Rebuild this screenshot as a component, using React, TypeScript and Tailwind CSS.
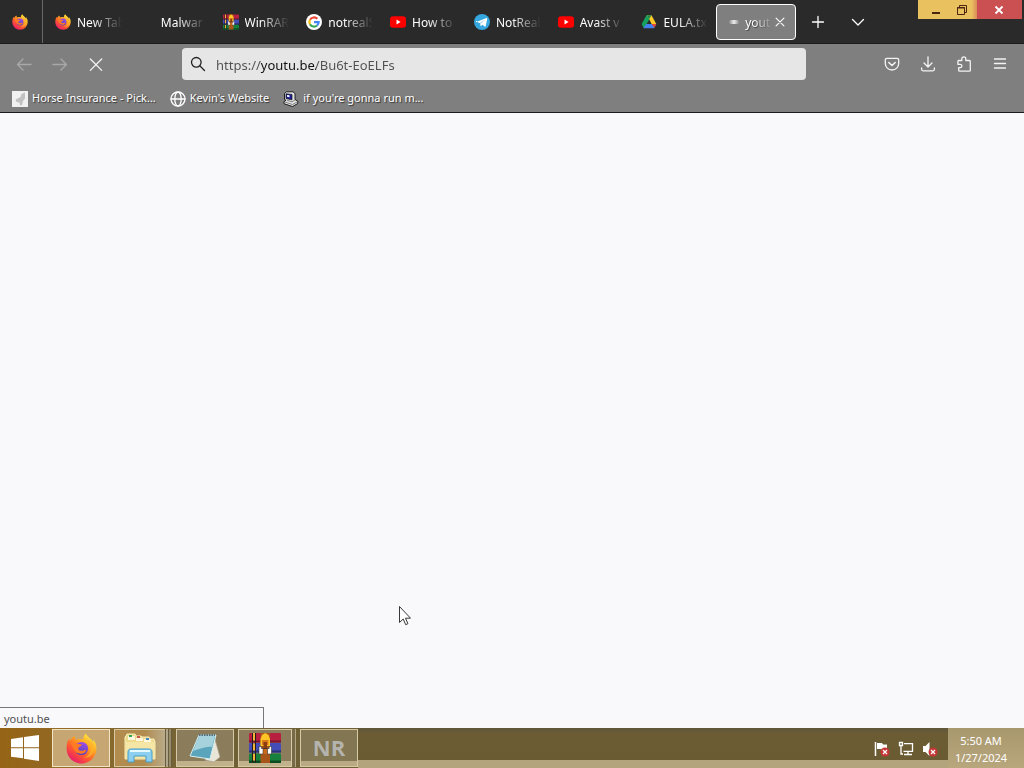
import type { ReactNode } from "react";

function FirefoxIcon({ className }: { className: string }) {
  return (
    <svg viewBox="0 0 32 32" className={className} aria-hidden="true">
      <defs>
        <linearGradient id="fx-body" x1="0.85" y1="0.05" x2="0.2" y2="0.95">
          <stop offset="0" stopColor="#fff04a" />
          <stop offset="0.35" stopColor="#ffa420" />
          <stop offset="0.65" stopColor="#ff5a2e" />
          <stop offset="1" stopColor="#e8186e" />
        </linearGradient>
        <linearGradient id="fx-globe" x1="0.7" y1="0" x2="0.3" y2="1">
          <stop offset="0" stopColor="#a04ce8" />
          <stop offset="1" stopColor="#4d42b8" />
        </linearGradient>
      </defs>
      <path
        d="M20.5 0.5c-2.5 2-2.8 4.500-2.600 6.300-2-.9-5.500-.8-7.200.4C9.300 6 8.800 4.500 8.900 3 6.500 4.300 4.800 6.500 4 8.200 3.500 7.500 3.400 6.300 3.500 5.500 1.500 8 .6 12 .6 16c0 8.700 6.900 15.500 15.400 15.500S31.400 24.700 31.400 16c0-3.800-1.300-7.500-3.500-9.800.5 1.500.6 2.800.5 3.800C26.500 5.500 22.300 4.500 20.500.5z"
        fill="url(#fx-body)"
      />
      <circle cx="16" cy="16" r="6.800" fill="url(#fx-globe)" />
      <path
        d="M5 10.500c2.500-1 4.500-.6 6 .8 2 .2 4.300.2 5.500.6-.3 1.800-3.200 2.300-3.800 3.200-.3 2 .8 3.200 3 3.300 2 .1 3.500-1.500 5.300-.6-1.200 3.300-5 4.400-8.200 3.200C8 19.300 7.500 14.500 5 10.500z"
        fill="#ff7a22"
      />
      <path d="M18 7.500c5 .6 8 5 7.500 10-.6 4.500-4 7.500-8 8 7 1 12-4 11.500-10.500C28.500 10 24 6.500 18 7.500z" fill="#ffb32c" opacity="0.75" />
    </svg>
  );
}

function WinrarIcon({ className }: { className: string }) {
  return (
    <svg viewBox="0 0 32 30" className={className} aria-hidden="true">
      <rect x="0" y="0" width="32" height="9.500" rx="1" fill="#b8203f" />
      <rect x="0" y="10" width="32" height="9.500" rx="1" fill="#444cb8" />
      <rect x="0" y="20.500" width="32" height="9.500" rx="1" fill="#16803c" />
      <path d="M0 7.500h32v2H0z" fill="#7a1430" />
      <path d="M0 17.500h32v2H0z" fill="#2a3078" />
      <path d="M0 27.500h32v2.500H0z" fill="#0a4c22" />
      <path d="M3 0h1v30H3zM6 0h1v30H6z" fill="#2a1a18" />
      <path d="M4 0h2v7.500H4zM4 10.500h2v7H4zM4 21h2v6.500H4z" fill="#f0b43c" />
      <path d="M11.500 0h9.500v30h-9.500z" fill="#a8551c" />
      <path d="M11.500 6l1.500-4 3.200-2L19.500 2 21 6v7h-9.500z" fill="#ffc425" />
      <path d="M13 7h6.500v5H13z" fill="#d8791c" />
      <rect x="14.500" y="9" width="3.500" height="6" fill="#8c3a10" />
      <path d="M10 13.500v7.500h4v-5.500h4.500V21h4v-7.500h-2.300v2h-7.900v-2z" fill="#fff" stroke="#333" strokeWidth="0.600" />
      <path d="M14.500 16h3.500v5h-3.500z" fill="#c8691e" />
    </svg>
  );
}

function GoogleIcon() {
  return (
    <svg viewBox="0 0 24 24" className="size-4 shrink-0" aria-hidden="true">
      <circle cx="12" cy="12" r="12" fill="#fff" />
      <g fill="none" strokeWidth="3.200">
        <path d="M17 7.200A7 7 0 0 0 5.900 8.700" stroke="#ea4335" />
        <path d="M5.900 8.700a7 7 0 0 0 0 6.600" stroke="#fbbc05" />
        <path d="M5.900 15.300A7 7 0 0 0 16.700 17.200" stroke="#34a853" />
        <path d="M16.700 17.200A7 7 0 0 0 19 12.200h-7" stroke="#4285f4" />
      </g>
    </svg>
  );
}

function YoutubeIcon() {
  return (
    <svg viewBox="0 0 16 16" className="size-4 shrink-0" aria-hidden="true">
      <rect x="0" y="2.300" width="16" height="11.500" rx="3" fill="#f00" />
      <path d="M6.500 5.600v4.800L10.600 8z" fill="#fff" />
    </svg>
  );
}

function TelegramIcon() {
  return (
    <svg viewBox="0 0 24 24" className="size-4 shrink-0" aria-hidden="true">
      <circle cx="12" cy="12" r="12" fill="#35a6de" />
      <path d="M4.500 11.800 18.800 6c.8-.3 1.300.2 1.100 1.100l-2.300 11c-.2.900-.8 1.100-1.500.7l-3.600-2.700-1.900 1.800c-.4.400-.7.300-.8-.3l-.9-4-3.800-1.100c-.9-.2-.9-.5-.6-.7z" fill="#fff" />
      <path d="m9.200 13.300 7.700-5.100-6.200 6-.3 3z" fill="#a9cfe6" />
    </svg>
  );
}

function DriveIcon() {
  return (
    <svg viewBox="0 0 24 24" className="size-4 shrink-0" aria-hidden="true">
      <path d="M8.300 2h3.700l2 3.500L5.800 19.500l-2.300 1L1 15z" fill="#16a25e" />
      <path d="M9.300 2h6.400L23 15h-7z" fill="#ffc928" />
      <path d="M9.300 2h6.400L12 8z" fill="#15884a" />
      <path d="M7.800 15H23l-3 5.500c-.4.600-.8.900-1.500.9H3.500z" fill="#447fee" />
      <path d="M16 15h7l-3 5.500z" fill="#e8453a" />
    </svg>
  );
}

type LineProps = { children: ReactNode; className?: string };

function Line({ children, className = "size-4" }: LineProps) {
  return (
    <svg
      viewBox="0 0 16 16"
      className={className}
      fill="none"
      stroke="currentColor"
      strokeWidth="1.300"
      strokeLinecap="round"
      strokeLinejoin="round"
      aria-hidden="true"
    >
      {children}
    </svg>
  );
}

const tabs: { label: string; icon: ReactNode }[] = [
  { label: "New Tab", icon: <FirefoxIcon className="size-4 shrink-0" /> },
  { label: "Malwar", icon: <span className="size-4 shrink-0" /> },
  { label: "WinRAR", icon: <WinrarIcon className="size-4 shrink-0" /> },
  { label: "notrealS", icon: <GoogleIcon /> },
  { label: "How to", icon: <YoutubeIcon /> },
  { label: "NotReal", icon: <TelegramIcon /> },
  { label: "Avast v", icon: <YoutubeIcon /> },
  { label: "EULA.tx", icon: <DriveIcon /> },
];

function TabStrip() {
  return (
    <header className="flex h-11 items-start border-b border-[#1c1c1c] bg-[#2a2a2a] text-white">
      <button aria-label="Firefox View" className="flex h-full w-[43px] shrink-0 items-center justify-center border-r border-[#686868] pr-0.5">
        <FirefoxIcon className="size-4" />
      </button>
      <div role="tablist" className="grid h-full max-w-[755px] min-w-0 flex-1 grid-cols-9 items-center pl-px">
        {tabs.map((tab) => (
          <button
            key={tab.label}
            role="tab"
            aria-selected="false"
            className="flex h-9 min-w-0 items-center gap-1.5 pr-1.5 pl-[11px] text-xs"
          >
            {tab.icon}
            <span className="min-w-0 flex-1 overflow-hidden mask-r-from-35% mask-r-to-100% pt-0.5 text-left whitespace-nowrap">
              {tab.label}
            </span>
          </button>
        ))}
        <div className="min-w-0 px-0.5">
          <div className="flex h-9 items-center rounded-[4px] border border-white bg-[#7f7f7f] pr-2 pl-3">
            <button role="tab" aria-selected="true" className="flex min-w-0 flex-1 items-center gap-1.5 text-xs">
              <span className="h-1 w-2.5 shrink-0 rounded-full bg-linear-to-r from-[#8c8c8c] via-[#eee] to-[#8c8c8c]" />
              <span className="min-w-0 flex-1 overflow-hidden mask-r-from-25% mask-r-to-100% pt-0.5 text-left whitespace-nowrap text-shadow-[1px_1px_1px_#444]">
                yout
              </span>
            </button>
            <button aria-label="Close tab" className="shrink-0">
              <Line className="size-3.5">
                <path d="M3.500 3.500l9 9M12.500 3.500l-9 9" />
              </Line>
            </button>
          </div>
        </div>
      </div>
      <button aria-label="Open a new tab" className="flex h-full w-10 shrink-0 items-center justify-center">
        <Line>
          <path d="M8 2.500v11M2.500 8h11" />
        </Line>
      </button>
      <button aria-label="List all tabs" className="flex h-full w-10 shrink-0 items-center justify-center">
        <Line>
          <path d="M2.500 5.500L8 11l5.500-5.500" />
        </Line>
      </button>
      <div className="mr-0.5 ml-auto flex h-[19px] shrink-0 text-[#4b2510]">
        <button aria-label="Minimize" className="flex w-8 items-center justify-center bg-[#e9c15e] pl-1">
          <svg viewBox="0 0 12 12" className="size-3" aria-hidden="true">
            <path d="M2 8h8v2H2z" fill="currentColor" />
          </svg>
        </button>
        <button aria-label="Restore" className="flex w-[27px] items-center justify-center bg-linear-to-r from-[#e9c15e] from-80% to-[#d98a58] pr-1">
          <svg viewBox="0 0 12 12" className="size-3" fill="none" stroke="currentColor" aria-hidden="true">
            <path d="M1.500 3.500h7v7h-7zM3.500 3V1.500h7v7H9" />
            <path d="M1 4h8" />
          </svg>
        </button>
        <button aria-label="Close" className="flex w-[45px] items-center justify-center bg-[#cb5052] pr-0.5 text-white">
          <svg viewBox="0 0 12 12" className="size-3" fill="none" stroke="currentColor" strokeWidth="1.800" aria-hidden="true">
            <path d="M2.500 2.500l7 7M9.500 2.500l-7 7" />
          </svg>
        </button>
      </div>
    </header>
  );
}

const navButton = "flex h-10 w-9 items-center justify-center";

function NavBar() {
  return (
    <div className="flex items-center bg-[#7f7f7f] px-1.5 text-[#f4f4f4]">
      <nav className="flex shrink-0">
        <button aria-label="Back" className={`${navButton} text-[#a8a8a8]`}>
          <Line>
            <path d="M15 8.500H1.500M7 3L1.500 8.500 7 14" />
          </Line>
        </button>
        <button aria-label="Forward" className={`${navButton} text-[#a8a8a8]`}>
          <Line>
            <path d="M1 8.500h13.500M9 3L14.500 8.500 9 14" />
          </Line>
        </button>
        <button aria-label="Stop" className={navButton}>
          <Line>
            <path d="M2.300 3l11.400 11.400M13.700 3L2.300 14.400" />
          </Line>
        </button>
      </nav>
      <label className="mr-[68px] ml-[68px] flex h-8 min-w-0 flex-1 items-center gap-2.5 rounded-[4px] bg-[#e6e6e6] px-2 text-[#222]">
        <Line className="size-4 shrink-0">
          <circle cx="6.300" cy="6.300" r="4.800" />
          <path d="M10 10l4.500 4.500" />
        </Line>
        <input
          aria-label="Address"
          defaultValue="https://youtu.be/Bu6t-EoELFs"
          spellCheck={false}
          className="min-w-0 flex-1 bg-[linear-gradient(to_right,#505050_44px,#111_44px,#111_100px,#505050_100px)] bg-clip-text pt-[3px] text-[13px] text-transparent outline-none"
        />
      </label>
      <div className="flex shrink-0">
        <button aria-label="Save to Pocket" className={navButton}>
          <Line>
            <path d="M2.800 2.300h10.400c.9 0 1.500.6 1.500 1.500v3.700a6.700 6.500 0 0 1-13.400 0V3.800c0-.9.600-1.500 1.500-1.500z" />
            <path d="M4.800 6.500L8 9.500l3.200-3" strokeWidth="1.600" />
          </Line>
        </button>
        <button aria-label="Downloads" className={navButton}>
          <Line>
            <path d="M8 .8v10M4 7l4 4 4-4M1.600 12v1.300c0 .9.600 1.500 1.500 1.500h9.800c.9 0 1.500-.6 1.500-1.500V12" />
          </Line>
        </button>
        <button aria-label="Extensions" className={navButton}>
          <Line>
            <path d="M2.700 4.500h3.100V2.900a2 2 0 0 1 4 0v1.600h3.500c.6 0 1 .4 1 1v8.700c0 .6-.4 1-1 1H3.700c-.6 0-1-.4-1-1v-2.500h1.500a1.700 1.700 0 0 0 0-3.400H1.900V5.500c0-.6.300-1 .8-1z" />
          </Line>
        </button>
        <button aria-label="Open application menu" className={navButton}>
          <Line>
            <path d="M2.500 3h11M2.500 7.500h11M2.500 12h11" />
          </Line>
        </button>
      </div>
    </div>
  );
}

function Bookmarks() {
  return (
    <nav className="flex h-[29px] items-center gap-3.5 border-b border-[#1b1b1b] bg-[#7f7f7f] px-3 pt-px text-[11px] whitespace-nowrap text-white text-shadow-[1px_1px_1px_#333]">
      <a href="#horse" className="flex items-center gap-1">
        <svg viewBox="0 0 16 16" className="size-4" aria-hidden="true">
          <path d="M0 0h16v16H0z" fill="#f1f1f1" />
          <path d="M13 1.500 9.500 3 8.500 6 3.500 8.500l1 2.500 3 .5.500 3 2-.5 1-4 2-2.500z" fill="#c2c2c2" />
        </svg>
        Horse Insurance - Pick...
      </a>
      <a href="#kevin" className="flex items-center gap-1">
        <Line>
          <circle cx="8" cy="8" r="7" />
          <ellipse cx="8" cy="8" rx="3.200" ry="7" />
          <path d="M1 8h14" />
        </Line>
        Kevin's Website
      </a>
      <a href="#run" className="flex items-center gap-1">
        <svg viewBox="0 0 16 16" className="size-4" aria-hidden="true">
          <path d="M1.500 2.500 3.500.8h6.500l2 1.700v6l2.800 1.700v2.300L9.500 15.500 1 12.700v-2l2-1.500-1.500-.7z" fill="#e2e2e2" stroke="#111" strokeWidth="0.900" />
          <path d="M3 2.800l6 .7v5.300l-6-1.200z" fill="#1a1c9a" stroke="#111" strokeWidth="0.700" />
          <path d="M4 4l2.500.3v2L4 5.800z" fill="#fff" />
          <path d="M2 11l7.500 2.500L14 11M4 9.300l5 1.500 3-1.800" stroke="#555" strokeWidth="0.700" fill="none" />
        </svg>
        if you're gonna run m...
      </a>
    </nav>
  );
}

const task = "flex h-[38px] items-center justify-center border border-[#d5c9a6]";

function Taskbar() {
  return (
    <footer className="flex h-10 shrink-0 items-center bg-[linear-gradient(to_bottom,#5e573c_0px,#6c5c34_6px,#6b5b32_32px,#b3a47e_32px)]">
      <button aria-label="Start" className="flex h-full w-[52px] shrink-0 items-center justify-center bg-linear-to-r from-[#966414] to-[#926822] pr-0.5">
        <svg viewBox="0 0 28 26" className="h-[26px] w-7" fill="#fff" aria-hidden="true">
          <path d="M0 4l12-1.700v10H0zM13 2.100L28 0v12.300H13zM0 13.300h12v10L0 21.700zM13 13.300h15V26l-15-2.200z" />
        </svg>
      </button>
      <div className="flex h-full items-center bg-linear-to-r from-[#966c26] via-[#6f6135] to-[#6f6135]">
        <button aria-label="Firefox" className={`${task} mr-1 w-[58px] border-[#f1e5c5] bg-[#c6a672]`}>
          <FirefoxIcon className="size-[31px]" />
        </button>
        <div className="mr-1 flex">
          <button aria-label="File Explorer" className={`${task} w-[51px] border-r-0 bg-linear-to-r from-[#b28c4e] from-60% to-[#b9ab89]`}>
            <svg viewBox="0 0 32 30" className="h-[30px] w-8" aria-hidden="true">
              <path d="M2 3l1-2h8l1 2h5l1 1h7l1 2h4l1 3v17H1V4z" fill="#edd98a" stroke="#f8edbc" />
              <path d="M4 3h7v4H4zM12 5h7v3h-7zM20 6h7v3h-7z" fill="#fff8df" />
              <path d="M5 2h3v2H5z" fill="#35a155" />
              <path d="M13 3h3v2h-3z" fill="#cf5648" />
              <path d="M22 5h3v2h-3z" fill="#458abf" />
              <path d="M2 9h29v16H2z" fill="#f6e6a5" />
              <path d="M4 19c0-2 1-3 3-3h18c2 0 3 1 3 3v10h-6v-6H10v6H4z" fill="#8dcfee" stroke="#439cc9" />
              <path d="M6 18h20" stroke="#e5f9ff" strokeWidth="2" />
            </svg>
          </button>
          <span className="h-[38px] w-1 border-x border-[#675d42] bg-[#b1a689]" />
          <span className="h-[38px] w-[3px] border-r border-[#675d42] bg-[#978b68]" />
        </div>
        <button aria-label="Notepad" className={`${task} mr-1 w-[58px] bg-[linear-gradient(#8b7d5c_31px,#c1b28c_31px)]`}>
          <svg viewBox="0 0 32 30" className="h-[30px] w-8" aria-hidden="true">
            <path d="M25 3l6 21-6 5-9-2z" fill="#e9e6d8" stroke="#a39d89" strokeWidth="0.700" />
            <path d="M10 2h17l-6 24L1 23z" fill="#5aa5bb" stroke="#d8eef1" />
            <path d="M10 3h16l-3 11C17 13 11 16 4 18z" fill="#a5d2dc" />
            <path d="M10 2h16" stroke="#56707a" strokeWidth="2" strokeDasharray="1.500 1" />
          </svg>
        </button>
        <div className="mr-1 flex">
          <button aria-label="WinRAR" className={`${task} w-[54px] bg-[linear-gradient(#8b7d5c_31px,#c1b28c_31px)]`}>
            <WinrarIcon className="h-[30px] w-8" />
          </button>
          <span className="h-[38px] w-1 border-r border-[#b4a785] bg-[#766a48]" />
        </div>
        <button className={`${task} w-[58px] bg-[linear-gradient(#827653_31px,#b9aa83_31px)] pb-0.5 font-['Open_Sans','Noto_Sans',sans-serif] text-[22px] font-bold text-[#b4b3ae]`}>
          NR
        </button>
      </div>
      <div className="ml-auto flex h-full items-center gap-2 pt-0.5 pr-2.5 text-white">
        <svg viewBox="0 0 16 16" className="size-4" aria-label="Action Center" role="img">
          <path d="M1.500 1v14" stroke="#fff" strokeWidth="1.500" />
          <path d="M3 2h5l1 1.500h4V9H8L7 8H3z" fill="#fff" />
          <circle cx="11" cy="11" r="4.500" fill="#c73535" />
          <path d="M9 9l4 4M13 9l-4 4" stroke="#fff" strokeWidth="1.300" />
        </svg>
        <svg viewBox="0 0 16 16" className="size-4" fill="none" stroke="#fff" strokeWidth="1.300" aria-label="Network" role="img">
          <path d="M6 2.700h8.500v7.600H5.500M10 10.500v3M6 13.500h8M1.500 1.500h3v3h-3zM3 4.500v8.500h2" />
        </svg>
        <svg viewBox="0 0 16 16" className="size-4" aria-label="Volume muted" role="img">
          <path d="M1 5h2.500L7.500 1v14l-4-4H1z" fill="#fff" />
          <circle cx="11" cy="11" r="4.500" fill="#c73535" />
          <path d="M9 9l4 4M13 9l-4 4" stroke="#fff" strokeWidth="1.300" />
        </svg>
      </div>
      <button className="h-full w-[76px] shrink-0 bg-linear-to-b from-[#a8986e] to-[#b8a67d] pt-0.5 pr-2.5 text-center text-[11px] leading-[17px] text-white">
        <span className="block">5:50 AM</span>
        <span className="block">1/27/2024</span>
      </button>
    </footer>
  );
}

export default function App() {
  return (
    <div className="relative flex min-h-screen flex-col bg-[#f9f9fb] font-['Noto_Sans','Open_Sans',sans-serif]">
      <TabStrip />
      <NavBar />
      <Bookmarks />
      <main className="relative flex-1">
        <svg viewBox="0 0 12 20" className="absolute top-[493px] left-[399px] h-5 w-3" aria-hidden="true">
          <path d="M.5.500v16l3.700-3.500 2.500 5.700 2.200-1-2.400-5.500h5z" fill="#fff" stroke="#222" strokeWidth="0.900" />
        </svg>
        <div className="absolute bottom-0 left-0 h-[21px] w-[264px] border-t border-r border-[#777] bg-[#f9f9fb] pt-[3px] pl-1 text-[11px] text-[#505050]">
          youtu.be
        </div>
      </main>
      <Taskbar />
    </div>
  );
}
